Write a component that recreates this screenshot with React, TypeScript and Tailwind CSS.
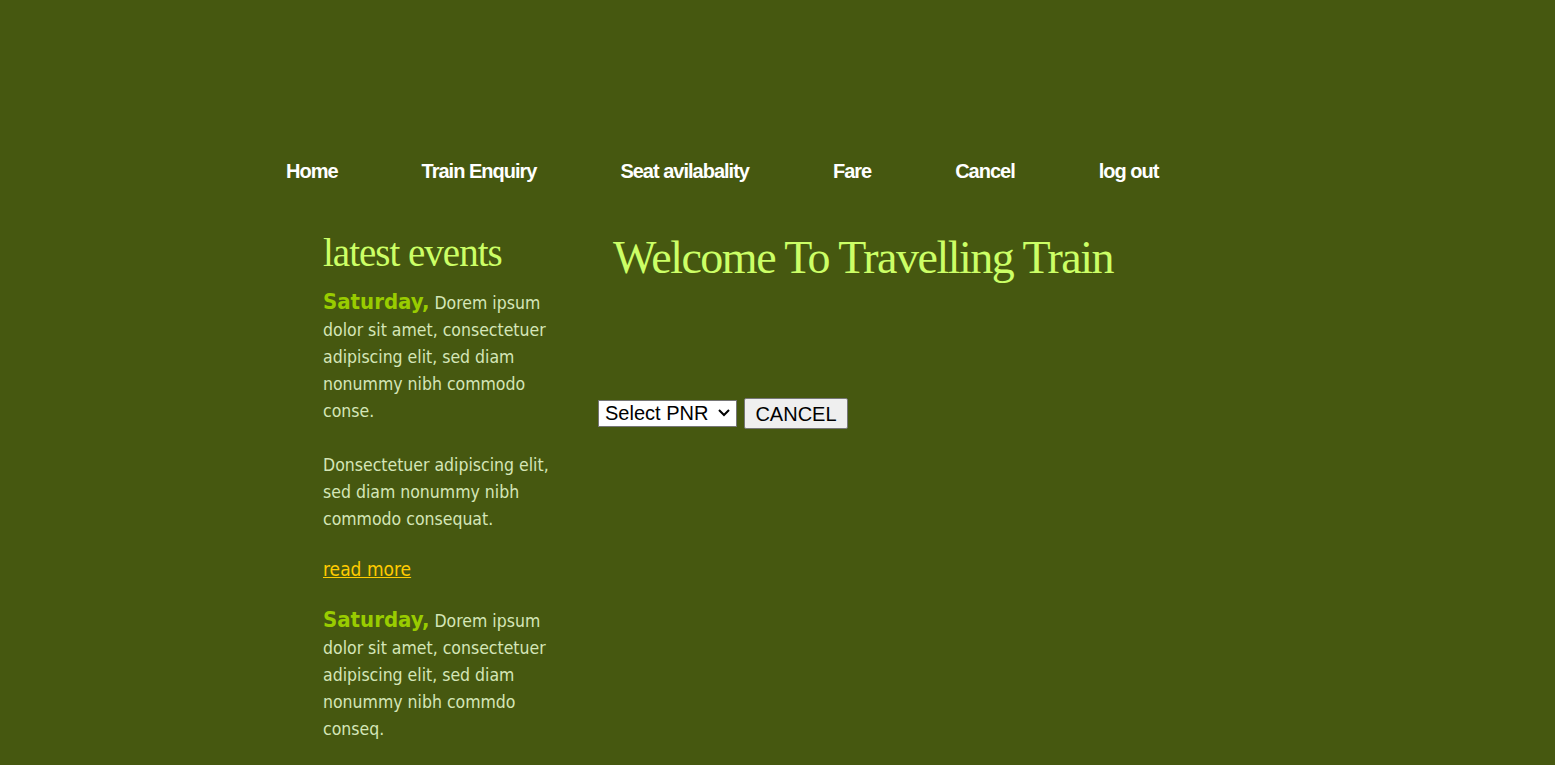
export default function App() {
  const nav = ['Home', 'Train Enquiry', 'Seat avilabality', 'Fare', 'Cancel', 'log out']
  const body = "font-['DejaVu_Sans_Condensed','DejaVu_Sans',sans-serif]"
  return (
    <div className="min-h-[765px] w-full bg-[#465810]">
      <div className="h-[150px]" />
      <ul className="flex pl-[244px] font-['Liberation_Sans',Arial,sans-serif] text-[20px] font-bold tracking-[-1px] text-white">
        {nav.map(n => (
          <li key={n} className="px-[42px] leading-[42px]">
            <a href="#">{n}</a>
          </li>
        ))}
      </ul>
      <div className="mt-[36px] flex pl-[323px]">
        <div className={`w-[240px] pt-[2px] ${body} text-[17.5px] leading-[27px] text-[#d5e6b8]`}>
          <h2 className="font-['Liberation_Serif',serif] text-[39px] leading-[46px] tracking-[-1px] text-[#ccff66]">
            latest events
          </h2>
          <p className="mt-[12px]">
            <span className="text-[22px] font-bold text-[#99cc00]">Saturday,</span> Dorem ipsum dolor sit amet,
            consectetuer adipiscing elit, sed diam nonummy nibh commodo conse.
          </p>
          <p className="mt-[27px]">
            Donsectetuer adipiscing elit, sed diam nonummy nibh commodo consequat.
          </p>
          <p className="mt-[23px] text-[19px]">
            <a href="#" className="text-[#ffcc00] underline">read more</a>
          </p>
          <p className="mt-[23px]">
            <span className="text-[22px] font-bold text-[#99cc00]">Saturday,</span> Dorem ipsum dolor sit amet,
            consectetuer adipiscing elit, sed diam nonummy nibh commdo conseq.
          </p>
        </div>
        <div className="ml-[35px] flex-1">
          <h1 className="ml-[15px] mt-[2px] font-['Liberation_Serif',serif] text-[46px] leading-[56px] tracking-[-1.5px] text-[#ccff66]">
            Welcome To Travelling Train
          </h1>
          <div className="mt-[112px] flex items-center gap-[7px] font-['Liberation_Sans',Arial,sans-serif] text-[20px]">
            <div className="relative">
              <select className="block h-[27px] w-[139px] appearance-none border border-[#767676] bg-white pl-[6px] pr-[28px] leading-[25px] text-black">
                <option>Select PNR</option>
              </select>
              <svg
                className="pointer-events-none absolute right-[6px] top-[8px]"
                width="14"
                height="10"
                viewBox="0 0 14 10"
                fill="none"
                stroke="black"
                strokeWidth="2"
              >
                <path d="M2 2l5 5 5-5" />
              </svg>
            </div>
            <button className="h-[31px] w-[104px] rounded-[2px] border border-[#767676] bg-[#efefef] text-black">
              CANCEL
            </button>
          </div>
        </div>
      </div>
    </div>
  )
}
